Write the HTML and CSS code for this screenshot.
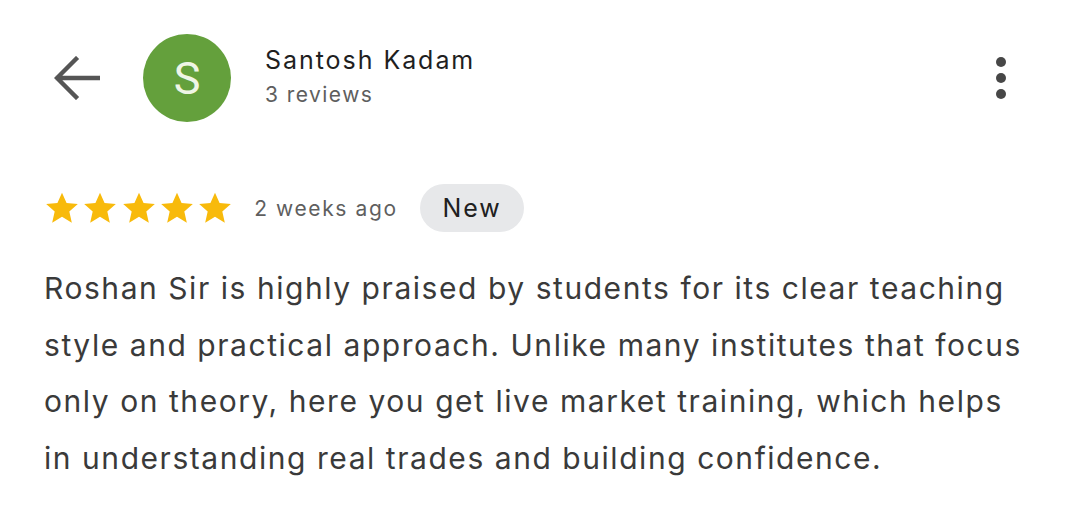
FILE: index.html
```html
<!DOCTYPE html>
<html lang="en">
<head>
<meta charset="utf-8">
<title>Review</title>
<link rel="stylesheet" href="styles.css">
</head>
<body>
<div class="review">
  <header class="head">
    <button class="back" aria-label="Back">
      <svg width="46" height="44" viewBox="0 0 46 44"><path d="M44 22H4M22 3L3 22L22 41" fill="none" stroke="#555" stroke-width="4.4" stroke-linecap="square"/></svg>
    </button>
    <div class="avatar">S</div>
    <div class="who">
      <div class="name">Santosh Kadam</div>
      <div class="count">3 reviews</div>
    </div>
    <button class="more" aria-label="More options"><span></span><span></span><span></span></button>
  </header>
  <div class="meta">
    <div class="stars">
      <svg viewBox="0 0 24 24" class="star"><path d="M12 1.8l3.05 6.9 7.5.7-5.67 4.98 1.67 7.37L12 17.9l-6.55 3.85 1.67-7.37L1.45 9.4l7.5-.7z"/></svg>
      <svg viewBox="0 0 24 24" class="star"><path d="M12 1.8l3.05 6.9 7.5.7-5.67 4.98 1.67 7.37L12 17.9l-6.55 3.85 1.67-7.37L1.45 9.4l7.5-.7z"/></svg>
      <svg viewBox="0 0 24 24" class="star"><path d="M12 1.8l3.05 6.9 7.5.7-5.67 4.98 1.67 7.37L12 17.9l-6.55 3.85 1.67-7.37L1.45 9.4l7.5-.7z"/></svg>
      <svg viewBox="0 0 24 24" class="star"><path d="M12 1.8l3.05 6.9 7.5.7-5.67 4.98 1.67 7.37L12 17.9l-6.55 3.85 1.67-7.37L1.45 9.4l7.5-.7z"/></svg>
      <svg viewBox="0 0 24 24" class="star"><path d="M12 1.8l3.05 6.9 7.5.7-5.67 4.98 1.67 7.37L12 17.9l-6.55 3.85 1.67-7.37L1.45 9.4l7.5-.7z"/></svg>
    </div>
    <span class="when">2 weeks ago</span>
    <span class="chip">New</span>
  </div>
  <p class="text">Roshan Sir is highly praised by students for its clear teaching style and practical approach. Unlike many institutes that focus only on theory, here you get live market training, which helps in understanding real trades and building confidence.</p>
</div>
</body>
</html>
```
FILE: styles.css
```css
* { box-sizing: border-box; }
html, body { margin: 0; background: #fff; }
body { font-family: Inter, Roboto, "Noto Sans", Arial, sans-serif; color: #3c3c3c; }
.review { padding: 34px 0 0 44px; width: 1080px; }
.head { display: flex; align-items: center; height: 88px; padding-right: 74px; }
.back { border: 0; background: none; padding: 0; margin: 0 0 0 10px; width: 46px; height: 44px; display: flex; }
.avatar { margin-left: 43px; width: 88px; height: 88px; border-radius: 50%; background: #64a03c; color: #eef5e6; font-family: Roboto, sans-serif; font-size: 45px; display: flex; align-items: center; justify-content: center; font-weight: 400; }
.who { margin-left: 34px; display: flex; flex-direction: column; gap: 7px; flex: 1; margin-top: -4px; }
.name { font-size: 25px; letter-spacing: 1.95px; color: #1f1f1f; }
.count { font-size: 21px; letter-spacing: 1.45px; color: #5e5e5e; }
.more { border: 0; background: none; padding: 0; display: flex; flex-direction: column; gap: 6px; }
.more span { width: 10px; height: 10px; border-radius: 50%; background: #474747; }
.meta { display: flex; align-items: center; margin-top: 62px; height: 48px; }
.stars { display: flex; gap: 2.3px; }
.star { width: 36px; height: 36px; fill: #f8ba0b; }
.when { margin-left: 21px; font-size: 21px; letter-spacing: 1.6px; color: #5f5f5f; }
.chip { margin-left: 22px; height: 48px; padding: 0 23px; border-radius: 24px; background: #e7e8ea; font-size: 25px; letter-spacing: 1.8px; color: #202020; display: flex; align-items: center; }
.text { margin: 28px 0 0; width: 995px; font-size: 30px; line-height: 56.7px; letter-spacing: 1.55px; color: #3a3a3a; }
```
